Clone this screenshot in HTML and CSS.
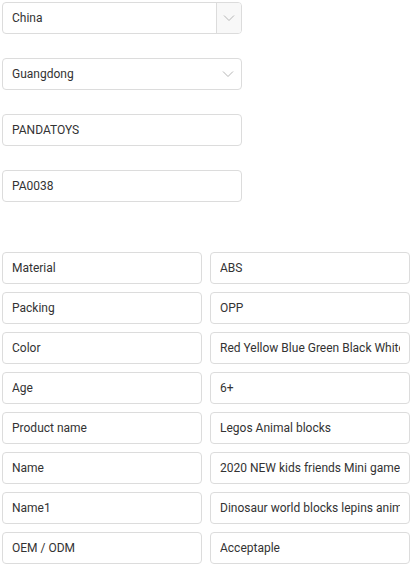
FILE: index.html
```html
<!DOCTYPE html>
<html>
<head>
<meta charset="utf-8">
<link rel="stylesheet" href="styles.css">
</head>
<body>
<div class="page">
  <div class="stack">
    <div class="field select addon">
      <span class="val">China</span>
      <span class="arrow-box"><svg width="12" height="8" viewBox="0 0 12 8"><path d="M1 1.5 L6 6.5 L11 1.5" fill="none" stroke="#b5b5b5" stroke-width="1"/></svg></span>
    </div>
    <div class="field select">
      <span class="val">Guangdong</span>
      <span class="arrow"><svg width="12" height="8" viewBox="0 0 12 8"><path d="M1 1.5 L6 6.5 L11 1.5" fill="none" stroke="#b5b5b5" stroke-width="1"/></svg></span>
    </div>
    <div class="field"><span class="val">PANDATOYS</span></div>
    <div class="field"><span class="val">PA0038</span></div>
  </div>
  <div class="grid">
    <div class="field cell"><span class="val">Material</span></div>
    <div class="field cell"><span class="val">ABS</span></div>
    <div class="field cell"><span class="val">Packing</span></div>
    <div class="field cell"><span class="val">OPP</span></div>
    <div class="field cell"><span class="val">Color</span></div>
    <div class="field cell"><span class="val">Red Yellow Blue Green Black White</span></div>
    <div class="field cell"><span class="val">Age</span></div>
    <div class="field cell"><span class="val">6+</span></div>
    <div class="field cell"><span class="val">Product name</span></div>
    <div class="field cell"><span class="val">Legos Animal blocks</span></div>
    <div class="field cell"><span class="val">Name</span></div>
    <div class="field cell"><span class="val">2020 NEW kids friends Mini game blocks</span></div>
    <div class="field cell"><span class="val">Name1</span></div>
    <div class="field cell"><span class="val">Dinosaur world blocks lepins animal</span></div>
    <div class="field cell"><span class="val">OEM / ODM</span></div>
    <div class="field cell"><span class="val">Acceptaple</span></div>
  </div>
</div>
</body>
</html>
```
FILE: styles.css
```css
* { box-sizing: border-box; }
html, body { margin: 0; padding: 0; background: #fff; }
body {
  font-family: Roboto, "Liberation Sans", sans-serif;
  font-size: 12px;
  color: #333;
}
.page {
  padding: 2px 0 0 2px;
  width: 413px;
}
.stack {
  display: flex;
  flex-direction: column;
  gap: 24px;
  width: 240px;
}
.field {
  height: 32px;
  border: 1px solid #dcdcdc;
  border-radius: 4px;
  display: flex;
  align-items: center;
  padding: 0 9px;
  overflow: hidden;
  white-space: nowrap;
  background: #fff;
}
.val {
  flex: 1;
  overflow: hidden;
  white-space: nowrap;
}
.select { padding-right: 0; }
.arrow {
  width: 24px;
  display: flex;
  justify-content: center;
  align-items: center;
  padding-right: 2px;
}
.arrow-box {
  width: 25px;
  align-self: stretch;
  border-left: 1px solid #dcdcdc;
  background: #f8f8f8;
  display: flex;
  justify-content: center;
  align-items: center;
}
.grid {
  margin-top: 50px;
  display: grid;
  grid-template-columns: 200px 200px;
  column-gap: 8px;
  row-gap: 8px;
}
```
